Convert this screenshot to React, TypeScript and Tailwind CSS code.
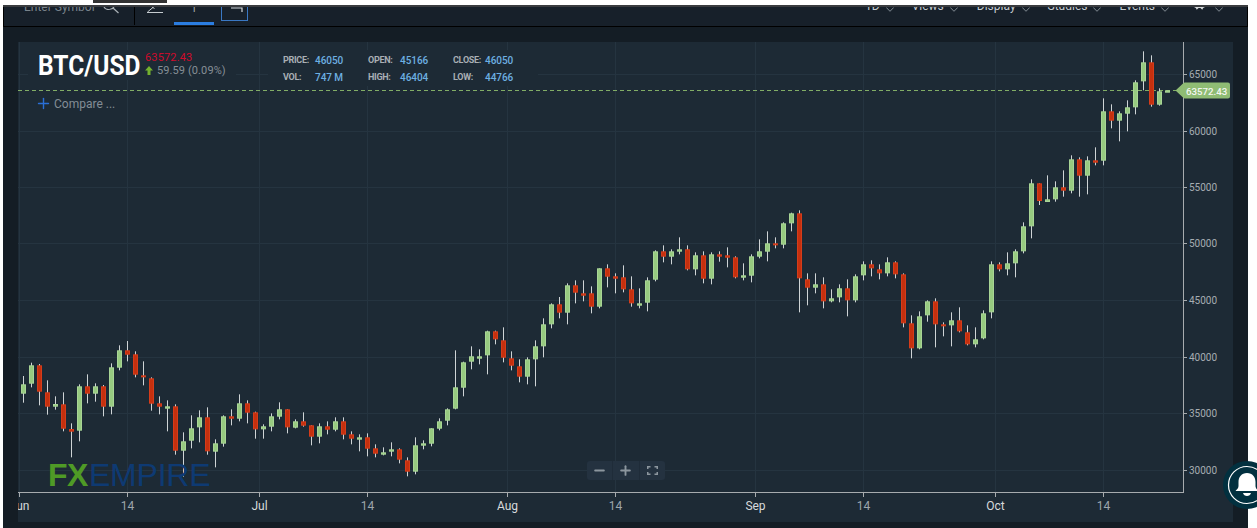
import { Minus, Plus } from "lucide-react";

type C = [number, number, number, number, number];

const s4: C[] = [
  [1,108,188,133,161],[1,68,142,76,131],[0,72,196,76,155],[0,121,224,157,200],[1,169,209,192,200],[0,157,274,193,266],[0,250,352,267,275],[1,133,304,139,272],[0,103,190,139,161],[1,130,185,139,161],[0,135,229,139,200],[1,70,223,82,200],[1,16,91,31,83],[0,3,64,31,44],[0,34,112,43,104],[0,64,136,106,112],[0,112,212,115,191],[0,169,223,190,200],[1,181,274,199,206],[0,193,344,199,332],[1,277,410,304,332],[1,226,325,265,302],[1,211,307,232,262],[0,202,344,232,334],[1,298,382,310,335],[1,226,320,229,311],[0,208,256,229,236],[1,163,244,190,236],[0,181,250,190,218],[0,215,296,217,268],[1,253,296,259,268],[1,220,274,229,260],[1,187,238,208,230],[0,208,280,208,262],[1,238,265,244,263],
];
const s5: C[] = [
  [0,337,380,364,377],[0,376,436,376,410],[1,370,430,379,410],[0,364,403,379,389],[1,352,394,364,389],[0,352,418,364,404],[0,394,433,403,416],[1,403,454,412,419],[0,400,469,412,446],[0,433,472,445,461],[1,442,466,457,464],[1,427,469,448,455],[0,445,490,448,479],[0,472,529,481,515],[1,412,523,436,515],[1,421,448,430,437],[1,385,439,385,431],[1,355,391,364,386],[1,325,376,328,362],[1,151,328,262,326],[1,185,289,187,263],[1,139,208,169,185],[1,148,193,169,176],[1,92,223,94,166],[0,92,133,94,118],[0,82,187,121,173],[0,154,211,175,197],[0,178,247,199,230],[1,172,253,178,230],[1,121,259,139,178],[1,55,172,73,139],[1,10,85,13,73],[0,-9,55,13,38],
];
const s6: C[] = [
  [1,250,373,256,338],[0,241,310,256,278],[0,241,304,280,287],[0,259,340,280,320],[1,205,325,205,320],[0,193,262,205,230],[0,220,280,229,236],[0,196,277,232,268],[0,229,320,268,310],[1,265,325,310,317],[1,232,334,241,308],[1,151,244,154,239],[0,136,187,154,170],[1,148,193,154,170],[1,112,163,148,155],[0,136,211,148,208],[1,157,226,166,208],[0,154,250,166,236],[1,157,253,163,236],[0,154,185,163,170],[0,142,202,166,173],[0,169,235,172,232],[1,190,241,226,233],[1,163,247,169,227],[1,118,175,154,170],[1,94,184,130,155],[0,112,145,130,136],[1,67,145,70,134],[1,38,94,40,70],[0,31,337,40,235],[0,220,316,238,263],[1,220,280,253,263],[0,232,325,253,304],[1,268,307,295,304],[1,253,307,265,292],[0,238,349,265,301],[1,223,307,229,301],
  [1,184,241,193,226],[0,181,229,193,205],[0,193,238,208,220],[1,172,229,187,220],[0,184,235,187,223],[0,220,382,223,370],[0,346,475,370,445],[1,334,448,349,445],[1,301,365,304,346],[0,295,442,304,373],[0,367,409,373,379],[1,337,439,361,376],[0,322,397,361,394],[0,376,436,397,433],[1,382,442,418,433],[1,331,418,340,415],[1,184,355,193,337],[0,187,214,193,208],[1,157,226,190,208],[1,148,232,154,190],[1,67,160,79,154],
];
const s3: C[] = [
  [1,538,715,550,679],[0,550,615,550,603],[1,526,606,598,606],[1,544,605,562,598],[0,511,590,562,572],[1,466,580,478,572],[0,472,590,478,527],[1,469,583,481,527],[0,442,496,481,488],[1,295,496,334,482],[0,313,385,334,362],[1,334,424,340,362],[1,301,394,322,341],[1,241,343,247,322],[1,154,271,187,244],[0,166,320,187,314],[1,265,317,274,314],[1,271,278,271,278],
];

const candles: C[] = [
  ...s4.map(([c, a, b, d, e]): C => [c, 340 + a / 3, 340 + b / 3, 340 + d / 3, 340 + e / 3]),
  ...s5.map(([c, a, b, d, e]): C => [c, 300 + a / 3, 300 + b / 3, 300 + d / 3, 300 + e / 3]),
  ...s6.map(([c, a, b, d, e]): C => [c, 200 + a / 3, 200 + b / 3, 200 + d / 3, 200 + e / 3]),
  ...s3.map(([c, a, b, d, e]): C => [c, a / 3, b / 3, d / 3, e / 3]),
];

const yTicks: [string, number][] = [
  ["65000", 74],["60000", 131],["55000", 187],["50000", 243],["45000", 300],["40000", 357],["35000", 413],["30000", 470],
];
const xTicks: [string, number, boolean][] = [
  ["Jun", 19, true],["14", 127, false],["Jul", 259, true],["14", 367, false],["Aug", 507, true],["14", 615, false],["Sep", 755, true],["14", 863, false],["Oct", 995, true],["14", 1103, false],
];

function Chevron() {
  return (
    <svg width="8" height="5" viewBox="0 0 8 5" className="ml-[6px] mt-[4px] shrink-0" fill="none" stroke="#808b92" strokeWidth="1">
      <path d="M0.3 0.5 L4 4.3 L7.7 0.5" />
    </svg>
  );
}

function NavItem({ label, className }: { label: string; className: string }) {
  return (
    <div className={`flex items-center ${className}`}>
      <span className="text-[12px] leading-none whitespace-nowrap text-[#c6ccd0] -mt-[3px]">{label}</span>
      <Chevron />
    </div>
  );
}

function Stat({ label, value }: { label: string; value: string }) {
  return (
    <>
      <span className="text-[9px] leading-[17px] font-bold tracking-[-0.3px] text-[#a9afb4]">{label}</span>
      <span className="text-[10px] leading-[17px] font-medium text-[#6db0e2] tracking-[-0.05px]">{value}</span>
    </>
  );
}

function Chart() {
  return (
    <svg viewBox="18 42 1215 480" className="block w-[1215px] h-[480px]">
      {yTicks.map(([, y]) => (
        <rect key={y} x="18" y={y} width="1166" height="1" fill="#253440" />
      ))}
      {xTicks.map(([, x]) => (
        <rect key={x} x={x} y="42" width="1" height="450" fill="#253440" />
      ))}
      <line x1="18" y1="90.5" x2="1176" y2="90.5" stroke="#82ad66" strokeWidth="1" strokeDasharray="4 3" />
      {candles.map(([c, wt, wb, bt, bb], i) => {
        const x = 23 + 8 * i;
        return (
          <g key={i}>
            {wb > wt + 3 && <rect x={x} y={wt} width="1" height={wb - wt} fill="#cfd4d6" />}
            <rect
              x={x - 1.5}
              y={bt + 0.5}
              width="4"
              height={Math.max(bb - bt - 1, 1)}
              fill={c ? "#97ca80" : "#c5300e"}
              stroke={c ? "#a9d596" : "#d63c1a"}
              strokeWidth="1"
            />
          </g>
        );
      })}
      <rect x="1183" y="42" width="1" height="451" fill="#a7abae" />
      <rect x="18" y="492" width="1166" height="1" fill="#a7abae" />
      {yTicks.map(([t, y]) => (
        <g key={t}>
          <rect x="1184" y={y} width="3" height="1" fill="#a7abae" />
          <text x="1189" y={y + 3.5} fontSize="10" fill="#a6adb2">{t}</text>
        </g>
      ))}
      {xTicks.map(([t, x, m]) => (
        <g key={x}>
          <rect x={x} y="493" width="1" height="4" fill="#a7abae" />
          <text x={x + 0.5} y="510" fontSize="12" textAnchor="middle" fill={m ? "#d7dadc" : "#9ea6ab"}>{t}</text>
        </g>
      ))}
      <path d="M1175.5 90.5 L1183 83.5 Q1183.5 82.5 1185 82.5 H1228 Q1230 82.5 1230 84.5 V96.5 Q1230 98.5 1228 98.5 H1185 Q1183.5 98.5 1183 97.5 Z" fill="#8fbc74" />
      <text x="1186" y="94.5" fontSize="9.7" fontWeight="500" fill="#f3f7f0">63572.43</text>
    </svg>
  );
}

export default function App() {
  return (
    <div className="relative w-[1257px] h-[528px] overflow-hidden bg-white font-['Roboto',sans-serif]">
      <div className="h-[5px]">
        <div className="ml-[93px] w-[74px] h-[3px] bg-[#333333]" />
      </div>
      <div className="ml-[3px] mr-[9px] h-[523px] bg-[#141d25] border-t-2 border-[#3a3c3f] flex flex-col">
        <div className="h-[20px] shrink-0 bg-[#17202a] border-x border-b border-black flex items-start overflow-hidden">
          <div className="flex items-center h-[14px] -mt-[3px] ml-[20px]">
            <span className="text-[12px] leading-none whitespace-nowrap text-[#79838b] -mt-[9px]">Enter Symbol</span>
          </div>
          <svg width="16" height="7" viewBox="0 0 16 7" className="ml-[8px] shrink-0" fill="none" stroke="#aab1b6" strokeWidth="1.2">
            <path d="M1 0 C2 2 5 3 8 2 C9 2 10 1 11 0 M10 1 L15.5 6" />
          </svg>
          <div className="ml-[15px] w-px h-[18px] bg-black shrink-0" />
          <svg width="18" height="6" viewBox="0 0 18 6" className="ml-[11px] shrink-0" fill="none" stroke="#c6ccd0" strokeWidth="1">
            <path d="M1 5.5 H17 M1.5 5 L7.5 0 M6 0 L8.5 1.5" />
          </svg>
          <div className="ml-[10px] w-[40px] h-[18px] border-b-[3px] border-[#2b7de0] flex justify-center shrink-0">
            <span className="text-[16px] leading-none text-[#aab1b6] font-light -mt-[8px]">1</span>
          </div>
          <div className="ml-[7px] w-[27px] h-[14px] border-x border-b border-[#3a78c4] flex justify-end shrink-0">
            <svg width="16" height="6" viewBox="0 0 16 6" fill="none" stroke="#d3d8db" strokeWidth="1.2">
              <path d="M0 1 H11 V5" />
            </svg>
          </div>
          <div className="flex-1 flex items-center justify-end h-[5px] pr-[24px] -mt-[2px]">
            <NavItem label="1D" className="" />
            <NavItem label="Views" className="ml-[18px]" />
            <NavItem label="Display" className="ml-[19px]" />
            <NavItem label="Studies" className="ml-[18px]" />
            <NavItem label="Events" className="ml-[18px]" />
            <svg width="11" height="5" viewBox="0 0 12 5" className="ml-[25px] shrink-0" fill="#d6dadc">
              <path d="M0 0 H12 V2 L10 3 L9 5 L7 3 H5 L3 5 L2 3 L0 2 Z" />
            </svg>
            <svg width="8" height="5" viewBox="0 0 8 5" className="ml-[10px] mt-[4px] shrink-0" fill="none" stroke="#808b92" strokeWidth="1">
              <path d="M0.3 0.5 L4 4.3 L7.7 0.5" />
            </svg>
          </div>
        </div>
        <div className="flex-1 pt-[15px] px-[15px]">
          <div className="relative w-[1215px] h-[480px] bg-[#1d2a35]">
            <Chart />
            <div className="absolute left-[10px] top-[8px] flex items-start">
              <div className="w-[208px] h-[30px] pl-[10px] flex items-center bg-[#1d2a35]">
                <div className="w-[107px] shrink-0 mt-[1px]">
                  <span className="block origin-left scale-x-[0.875] text-[28px] leading-none font-bold text-white whitespace-nowrap">BTC/USD</span>
                </div>
                <div className="flex flex-col -mt-[2px]">
                  <span className="text-[11px] leading-[13px] text-[#cf0a2c] tracking-[0.15px]">63572.43</span>
                  <div className="flex items-center">
                    <svg width="8" height="9" viewBox="0 0 8 9" className="mr-[4px] shrink-0" fill="#74b12e">
                      <path d="M4 0 L8 4.5 H5.5 V9 H2.5 V4.5 H0 Z" />
                    </svg>
                    <span className="text-[11px] leading-[13px] text-[#868f96] tracking-[0.1px] whitespace-nowrap">59.59 (0.09%)</span>
                  </div>
                </div>
              </div>
              <div className="ml-[32px] w-[270px] h-[36px] pl-[15px] pt-[2px] bg-[#1d2a35]">
                <div className="grid grid-cols-[32px_53px_32px_53px_32px_53px]">
                  <Stat label="PRICE:" value="46050" />
                  <Stat label="OPEN:" value="45166" />
                  <Stat label="CLOSE:" value="46050" />
                  <Stat label="VOL:" value="747 M" />
                  <Stat label="HIGH:" value="46404" />
                  <Stat label="LOW:" value="44766" />
                </div>
              </div>
            </div>
            <div className="absolute left-[17px] top-[53px] flex items-center">
              <Plus size={17} strokeWidth={2} color="#2a6fd6" />
              <span className="ml-[2px] text-[12px] leading-none text-[#838d95]">Compare ...</span>
            </div>
            <div className="absolute left-[30px] top-[417px] flex items-center text-[32px] leading-none font-['Liberation_Sans',sans-serif]">
              <span className="font-bold text-[#4f9a26] tracking-[-0.5px]">FX</span>
              <span className="ml-[1px] text-[#0e3a73] tracking-[-0.2px]">EMPIRE</span>
            </div>
            <div className="absolute left-[569px] top-[419px] w-[78px] h-[19px] bg-[#243240] rounded-[3px] flex">
              <div className="flex-1 flex items-center justify-center border-r border-[#1f2c39]">
                <Minus size={15} strokeWidth={3} color="#8c969e" />
              </div>
              <div className="flex-1 flex items-center justify-center border-r border-[#1f2c39]">
                <Plus size={15} strokeWidth={3} color="#8c969e" />
              </div>
              <div className="flex-1 flex items-center justify-center">
                <svg width="11" height="9" viewBox="0 0 11 9" fill="none" stroke="#8c969e" strokeWidth="1.5">
                  <path d="M0.75 3 V0.75 H3.5 M7.5 0.75 H10.25 V3 M10.25 6 V8.25 H7.5 M3.5 8.25 H0.75 V6" />
                </svg>
              </div>
            </div>
          </div>
        </div>
      </div>
      <svg width="48" height="48" viewBox="0 0 48 48" className="absolute left-[1223px] top-[461px]">
        <circle cx="24" cy="24" r="24" fill="#02303f" />
        <circle cx="24" cy="24" r="18.5" fill="none" stroke="#ffffff" strokeWidth="1.2" />
        <path d="M24 12 c-5.5 0-8.5 4-8.5 9 v4 c0 2-1.5 3.5-3 5 h23 c-1.5-1.5-3-3-3-5 v-4 c0-5-3-9-8.5-9z" fill="#ffffff" />
        <path d="M20 32 h8 c-.5 2-2 3-4 3 s-3.5-1-4-3z" fill="#ffffff" />
      </svg>
    </div>
  );
}
